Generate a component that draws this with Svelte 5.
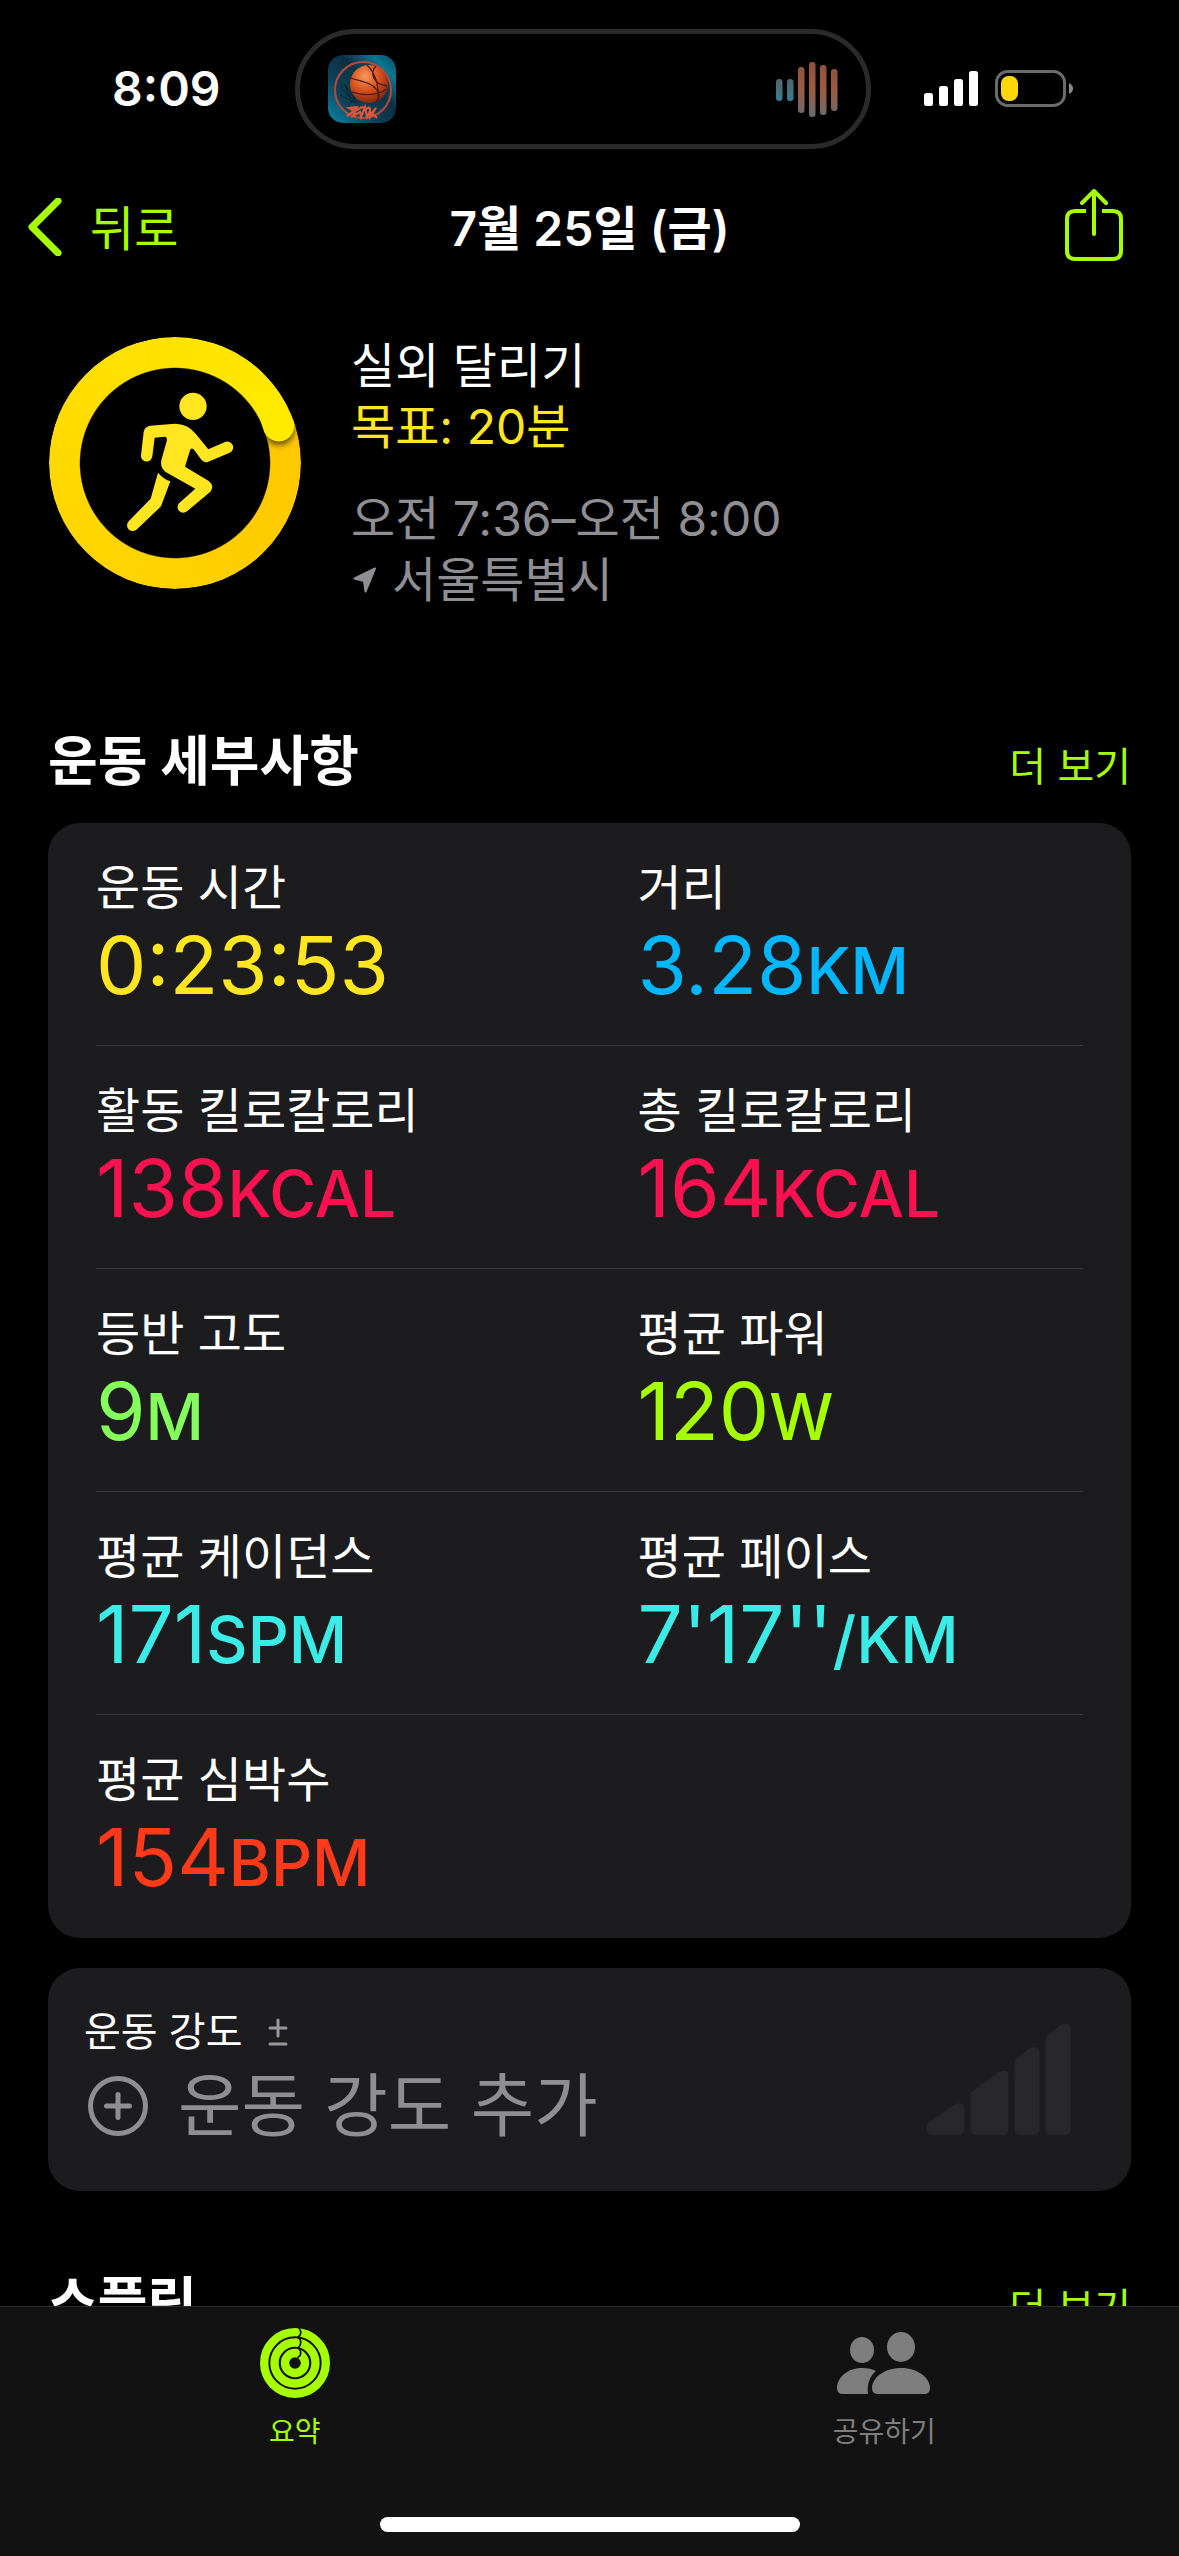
<script>
	const rows = [
		[
			{ label: '운동 시간', value: '0:23:53', unit: '', color: 'yellow' },
			{ label: '거리', value: '3.28', unit: 'KM', color: 'blue' }
		],
		[
			{ label: '활동 킬로칼로리', value: '138', unit: 'KCAL', color: 'pink' },
			{ label: '총 킬로칼로리', value: '164', unit: 'KCAL', color: 'pink' }
		],
		[
			{ label: '등반 고도', value: '9', unit: 'M', color: 'green' },
			{ label: '평균 파워', value: '120', unit: 'W', color: 'lime' }
		],
		[
			{ label: '평균 케이던스', value: '171', unit: 'SPM', color: 'cyan' },
			{ label: '평균 페이스', value: "7'17''", unit: '/KM', color: 'cyan' }
		],
		[{ label: '평균 심박수', value: '154', unit: 'BPM', color: 'red' }]
	];

	// x, top, bottom of each bar in the now-playing waveform
	const wave = [
		[0, 17, 39],
		[11, 17, 39],
		[22, 5, 51],
		[33, 0, 55],
		[44, 3, 53],
		[55, 7, 49]
	];
	const signal = [13, 20, 27, 35];
</script>

<div class="screen">
	<div class="status">
		<span class="time">8:09</span>
		<div class="island">
			<svg class="app-icon" viewBox="0 0 68 68" aria-hidden="true">
				<defs>
					<linearGradient id="court" x1="0" y1="1" x2="1" y2="0">
						<stop offset="0" stop-color="#0a86a8" />
						<stop offset="0.35" stop-color="#0d4259" />
						<stop offset="0.6" stop-color="#0e2e42" />
						<stop offset="0.82" stop-color="#087791" />
						<stop offset="1" stop-color="#0c4a60" />
					</linearGradient>
					<radialGradient id="ball" cx="0.4" cy="0.3" r="0.75">
						<stop offset="0" stop-color="#f79a5a" />
						<stop offset="0.5" stop-color="#d9511d" />
						<stop offset="1" stop-color="#7c2410" />
					</radialGradient>
				</defs>
				<rect width="68" height="68" rx="15" fill="url(#court)" />
				<circle cx="35" cy="35" r="28" fill="#0d3a4e" fill-opacity="0.6" stroke="#b5493c" stroke-width="2" />
				<path d="M13 32l10 12-6-14 14 20M12 40l16 8M28 40l-8 12" stroke="#0a2230" fill="none" />
				<circle cx="41" cy="29" r="19" fill="url(#ball)" />
				<path
					d="M23 23c10 4 22 4 27 14 2 4 0 8-2 10M39 10c8 8 12 20 11 34M24 37c12 4 24 4 35-3M48 11c-6 6-4 18 11 20"
					stroke="#4a1b12"
					stroke-width="1.3"
					fill="none"
				/>
				<path
					d="M19 61l7-5-5-3 8-1-4 9 7-4 1 5 4-10 2 10 3-6M24 53l5 2 5-3 4 2 4-2M42 53v9l6-9-4 5 5 5"
					stroke="#d9573c"
					stroke-width="2.2"
					fill="none"
				/>
			</svg>
			<svg class="wave" viewBox="0 0 62 55" aria-hidden="true">
				<defs>
					<linearGradient id="cool" gradientUnits="userSpaceOnUse" x1="0" y1="17" x2="0" y2="39">
						<stop offset="0" stop-color="#53636a" />
						<stop offset="1" stop-color="#377f90" />
					</linearGradient>
					<linearGradient id="warm" gradientUnits="userSpaceOnUse" x1="40" y1="0" x2="36" y2="55">
						<stop offset="0" stop-color="#91513f" />
						<stop offset="0.5" stop-color="#9d5a40" />
						<stop offset="1" stop-color="#666b70" />
					</linearGradient>
				</defs>
				{#each wave as [x, top, bottom], i}
					<rect {x} y={top} width="6.5" height={bottom - top} rx="3" fill={i < 2 ? 'url(#cool)' : 'url(#warm)'} />
				{/each}
			</svg>
		</div>
		<div class="status-right">
			<svg class="signal" viewBox="0 0 54 35" aria-hidden="true">
				{#each signal as h, i}
					<rect x={i * 15} y={35 - h} width="9" height={h} rx="2.5" fill="#fff" />
				{/each}
			</svg>
			<svg class="battery" viewBox="0 0 78 37" aria-hidden="true">
				<rect x="1.5" y="1.5" width="68" height="34" rx="11" fill="none" stroke="#6b6b6b" stroke-width="3" />
				<rect x="6" y="6" width="17" height="25" rx="7.5" fill="#ffd60a" />
				<path d="M74 13q4 2 4 5.5t-4 5.5z" fill="#8a8a8a" />
			</svg>
		</div>
	</div>

	<header class="nav">
		<button class="back" type="button">
			<svg viewBox="0 0 34 58" aria-hidden="true">
				<path d="M30 3L4 29l26 26" fill="none" stroke="currentColor" stroke-width="7" stroke-linecap="round" stroke-linejoin="round" />
			</svg>
			<span>뒤로</span>
		</button>
		<h1>7월 25일 (금)</h1>
		<button class="share" type="button" aria-label="공유">
			<svg viewBox="0 0 58 72" aria-hidden="true">
				<g fill="none" stroke="currentColor" stroke-width="4" stroke-linecap="round" stroke-linejoin="round">
					<path d="M21 22H10q-8 0-8 8v32q0 8 8 8h38q8 0 8-8V30q0-8-8-8H37" stroke-linecap="butt" />
					<path d="M29 45V3M17 14L29 2l12 12" />
				</g>
			</svg>
		</button>
	</header>

	<main>
		<section class="summary">
			<div class="ring">
				<svg viewBox="30 35 756 756" aria-hidden="true">
					<defs>
						<clipPath id="track">
							<path clip-rule="evenodd" d="M407 35a378 378 0 1 0 1 0zM407 129a284 284 0 1 1-1 0z" />
						</clipPath>
						<filter id="soft" x="-50%" y="-50%" width="200%" height="200%">
							<feGaussianBlur stdDeviation="10" />
						</filter>
					</defs>
					<g clip-path="url(#track)">
						<circle cx="720" cy="312" r="46" fill="#5a4500" filter="url(#soft)" />
					</g>
					<path d="M640 210L674 315A46 46 0 0 0 764 287L712 190z" fill="#ffea00" />
					<g fill="#ffe620">
						<circle cx="462" cy="243" r="41" />
						<path
							d="M334 301L408 295Q446 295 470 325L508 372L558 350A17 17 0 0 1 572 382L508 409Q495 415 486 402L464 372Q456 366 453 375L438 424L508 466Q528 480 514 499L444 558A17 17 0 0 1 420 534L469 490L380 440Q363 426 367 405L384 344Q384 334 376 334L347 337L340 393A17 17 0 0 1 306 390L314 320Q317 303 334 301z"
						/>
						<path d="M357 442Q372 460 394 468L366 543L294 612A17 17 0 0 1 269 588L335 520z" />
					</g>
				</svg>
			</div>
			<div class="info">
				<p class="name">실외 달리기</p>
				<p class="goal">목표: 20분</p>
				<p class="when">오전 7:36–오전 8:00</p>
				<p class="where">
					<svg viewBox="0 0 24 26" aria-hidden="true">
						<path d="M22 1.5L1.5 11.5L11 14L12.5 24.5z" fill="currentColor" stroke="currentColor" stroke-width="2" stroke-linejoin="round" />
					</svg>
					서울특별시
				</p>
			</div>
		</section>

		<section>
			<div class="section-head">
				<h2>운동 세부사항</h2>
				<a href="#details">더 보기</a>
			</div>
			<div class="card metrics">
				{#each rows as row}
					<div class="row">
						{#each row as item}
							<div class="metric">
								<div class="label">{item.label}</div>
								<div class="value {item.color}">
									{item.value}{#if item.unit}<span class="unit">{item.unit}</span>{/if}
								</div>
							</div>
						{/each}
					</div>
				{/each}
			</div>
		</section>

		<button class="card effort" type="button">
			<span class="effort-text">
				<span class="effort-title">
					운동 강도
					<svg viewBox="0 0 20 28" aria-hidden="true">
						<path d="M2 10h16M10 2v16M2 26h16" stroke="#98989f" stroke-width="3" stroke-linecap="round" />
					</svg>
				</span>
				<span class="effort-add">
					<svg viewBox="0 0 60 60" aria-hidden="true">
						<circle cx="30" cy="30" r="27.5" fill="none" stroke="currentColor" stroke-width="5" />
						<path d="M18.5 30h23M30 18.5v23" stroke="currentColor" stroke-width="5" stroke-linecap="round" />
					</svg>
					운동 강도 추가
				</span>
			</span>
			<svg class="effort-bars" viewBox="200 281 434 334" aria-hidden="true">
				<g fill="#28282a">
					<path d="M209 578L284 525Q315 512 315 539V597Q315 615 297 615H217Q201 613 201 597Q201 584 209 578z" />
					<path d="M340 484L418 427Q447 416 447 441V597Q447 615 429 615H351Q333 615 333 597V498Q333 489 340 484z" />
					<path d="M472 386L510 356Q540 345 540 370V597Q540 615 522 615H483Q465 615 465 597V399Q465 392 472 386z" />
					<path d="M565 316L603 286Q633 275 633 300V597Q633 615 615 615H576Q558 615 558 597V329Q558 322 565 316z" />
				</g>
			</svg>
		</button>

		<section class="splits">
			<div class="section-head">
				<h2>스플릿</h2>
				<a href="#splits">더 보기</a>
			</div>
		</section>
	</main>

	<nav class="tabs">
		<div class="tab-row">
			<a class="tab active" href="#summary">
				<svg viewBox="60 84 210 210" aria-hidden="true">
					<g fill="none" stroke="currentColor" stroke-width="25">
						<circle cx="165" cy="189" r="92.5" />
						<circle cx="165" cy="189" r="61.5" />
						<circle cx="165" cy="189" r="30" />
					</g>
					<g fill="none" stroke="#121212" stroke-width="5">
						<path d="M176 84Q184 92 182 100Q181 108 172 112" />
						<path d="M176 113Q184 122 182 130Q181 139 172 144" />
						<path d="M176 145Q184 152 182 161Q181 169 172 173" />
					</g>
				</svg>
				요약
			</a>
			<a class="tab" href="#sharing">
				<svg class="people" viewBox="838 2331 94 64" aria-hidden="true">
					<g fill="currentColor">
						<ellipse cx="863" cy="2350" rx="12" ry="13" />
						<ellipse cx="902" cy="2347" rx="14" ry="15" />
						<path d="M844 2394q-6 0-6-6c0-10 10-20 25-20 6 0 10 1 14 3-7 6-9 14-8 23z" />
						<path d="M879 2394q-6 0-6-6c0-10 12-20 29-20s29 10 29 20q0 6-6 6z" />
					</g>
				</svg>
				공유하기
			</a>
		</div>
		<div class="home"></div>
	</nav>
</div>

<style>
	:global(body) {
		margin: 0;
		background: #000;
	}

	.screen {
		display: flex;
		flex-direction: column;
		height: 100vh;
		overflow: hidden;
		background: #000;
		color: #fff;
		font-family: Inter, 'Noto Sans CJK KR', sans-serif;
		font-size: 48px;
	}

	svg {
		display: block;
		flex: none;
	}

	h1,
	h2,
	p {
		margin: 0;
	}

	button {
		border: 0;
		padding: 0;
		background: none;
		color: inherit;
		font: inherit;
		text-align: left;
		cursor: pointer;
	}

	a {
		color: inherit;
		text-decoration: none;
	}

	/* Status bar */
	.status {
		display: grid;
		grid-template-columns: 1fr auto 1fr;
		align-items: center;
		padding: 29px 14px 0 0;
	}

	.time {
		padding-right: 74px;
		text-align: right;
		font-weight: 600;
		line-height: 60px;
	}

	.island {
		box-sizing: border-box;
		display: flex;
		align-items: center;
		justify-content: space-between;
		width: 576px;
		height: 120px;
		padding: 0 28px;
		border: 5px solid #2a2a2a;
		border-radius: 60px;
	}

	.app-icon {
		width: 68px;
		height: 68px;
	}

	.wave {
		width: 62px;
		height: 55px;
	}

	.status-right {
		display: flex;
		align-items: center;
		gap: 17px;
		padding-left: 53px;
		margin-bottom: 2px;
	}

	.signal {
		width: 54px;
		height: 35px;
	}

	.battery {
		width: 78px;
		height: 37px;
	}

	/* Navigation */
	.nav {
		display: grid;
		grid-template-columns: 1fr auto 1fr;
		align-items: center;
		height: 156px;
		padding: 0 56px 0 28px;
	}

	.back {
		display: flex;
		align-items: center;
		gap: 28px;
		color: #a6ff00;
	}

	.back svg {
		width: 34px;
		height: 58px;
	}

	.back span,
	.nav h1,
	.share {
		padding-bottom: 5px;
	}

	.nav h1 {
		padding-left: 28px;
		font-size: 48px;
		font-weight: 600;
	}

	.share {
		justify-self: end;
		color: #a6ff00;
	}

	.share svg {
		width: 58px;
		height: 72px;
	}

	/* Content */
	main {
		flex: 1;
		min-height: 0;
		overflow: hidden;
		padding: 30px 48px 0;
	}

	.summary {
		display: flex;
		gap: 50px;
	}

	.ring {
		position: relative;
		flex: none;
		width: 252px;
		height: 252px;
		margin: 2px 0 0 1px;
	}

	.ring::before {
		content: '';
		position: absolute;
		inset: 0;
		border-radius: 50%;
		background: conic-gradient(from 70deg, #ffc700, #ffd400 38%, #ffdd00 65%, #ffea00);
		-webkit-mask: radial-gradient(closest-side, transparent 75%, #000 76%);
		mask: radial-gradient(closest-side, transparent 75%, #000 76%);
	}

	.ring svg {
		position: relative;
		width: 252px;
		height: 252px;
	}

	.info {
		line-height: 61px;
	}

	.goal {
		color: #ffe620;
	}

	.when,
	.where {
		color: #8e8e93;
	}

	.when {
		margin-top: 31px;
	}

	.where {
		display: flex;
		align-items: center;
		gap: 15px;
	}

	.where svg {
		width: 24px;
		height: 26px;
		margin-left: 2px;
	}

	.section-head {
		display: flex;
		align-items: baseline;
		justify-content: space-between;
		padding-top: 120px;
		margin-bottom: 29px;
	}

	.section-head h2 {
		font-size: 54px;
		font-weight: 700;
		line-height: 64px;
	}

	.section-head a {
		color: #a6ff00;
		font-size: 40px;
		line-height: 48px;
	}

	.splits .section-head {
		padding-top: 80px;
	}

	.card {
		border-radius: 32px;
		background: #1c1c1e;
	}

	.metrics {
		padding-bottom: 1px;
	}

	.row {
		display: grid;
		grid-template-columns: 1fr 1fr;
		gap: 96px;
		margin: 0 48px;
		padding: 36px 0;
	}

	.row + .row {
		border-top: 1px solid #3a3a3c;
	}

	.label {
		margin-bottom: 4px;
		line-height: 58px;
	}

	.value {
		font-size: 80px;
		line-height: 88px;
		white-space: nowrap;
	}

	.unit {
		font-size: 64px;
		font-weight: 500;
		line-height: 64px;
	}

	.yellow {
		color: #ffe620;
	}

	.blue {
		color: #00b7ff;
	}

	.pink {
		color: #fa114f;
	}

	.green {
		color: #84ff5c;
	}

	.lime {
		color: #a6ff00;
	}

	.cyan {
		color: #3aebe6;
	}

	.red {
		color: #ff3a1a;
	}

	/* Effort */
	.effort {
		display: flex;
		align-items: center;
		justify-content: space-between;
		box-sizing: border-box;
		width: 100%;
		margin-top: 30px;
		padding: 34px 60px 41px 36px;
	}

	.effort-title {
		display: flex;
		align-items: center;
		gap: 26px;
		font-size: 40px;
		line-height: 60px;
	}

	.effort-title svg {
		width: 20px;
		height: 28px;
	}

	.effort-add {
		display: flex;
		align-items: center;
		gap: 30px;
		padding-left: 4px;
		color: #8e8e93;
		font-size: 69px;
		line-height: 88px;
	}

	.effort-add svg {
		width: 60px;
		height: 60px;
	}

	.effort-bars {
		width: 145px;
		height: 112px;
		margin-top: 6px;
	}

	/* Tab bar */
	.tabs {
		flex: none;
		border-top: 1px solid #2a2a2a;
		background: #121212;
	}

	.tab-row {
		display: flex;
		padding-top: 21px;
	}

	.tab {
		display: flex;
		flex: 1;
		flex-direction: column;
		align-items: center;
		gap: 16px;
		color: #7e7e7e;
		font-size: 28px;
		line-height: 36px;
	}

	.tab.active {
		color: #a6ff00;
	}

	.tab svg {
		width: 70px;
		height: 70px;
	}

	.tab .people {
		width: 94px;
	}

	.home {
		width: 420px;
		height: 15px;
		margin: 67px auto 24px;
		border-radius: 8px;
		background: #fff;
	}
</style>
